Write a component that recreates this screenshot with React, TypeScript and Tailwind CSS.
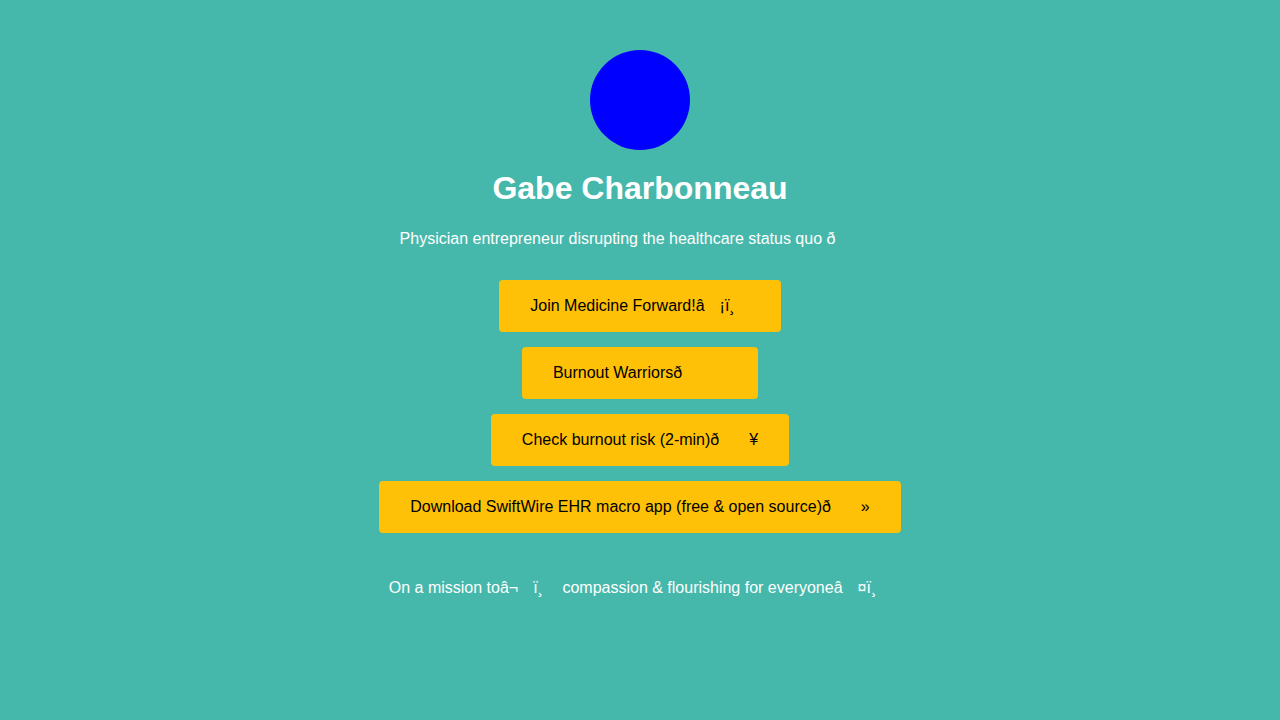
import React from "react";

// gap left by the unrenderable bytes in the broken emoji
const Gap: React.FC<{ n?: number }> = ({ n = 1 }) => (
    <span className={n === 1 ? "inline-block w-[15px]" : n === 2 ? "inline-block w-[30px]" : "inline-block w-[45px]"} />
);

const links: { id: number; label: React.ReactNode }[] = [
    { id: 1, label: <>Join Medicine Forward!â<Gap />¡ï¸<Gap /></> },
    { id: 2, label: <>Burnout Warriorsð<Gap n={3} /></> },
    { id: 3, label: <>Check burnout risk (2-min)ð<Gap n={2} />¥</> },
    { id: 4, label: <>Download SwiftWire EHR macro app (free &amp; open source)ð<Gap n={2} />»</> },
];

const App: React.FC = () => {
    return (
        <div className="min-h-screen w-full bg-[#46b8ab] text-white font-['Liberation_Sans',Arial,sans-serif]">
            <div className="flex flex-col items-center pt-[50px]">
                {/* Avatar */}
                <div className="w-[100px] h-[100px] rounded-full bg-[#0000ff]" />

                <h1 className="mt-[20px] text-[32px] leading-[37px] font-bold">Gabe Charbonneau</h1>
                <p className="mt-[23px] text-[16px] leading-[18px] whitespace-nowrap">
                    Physician entrepreneur disrupting the healthcare status quo ð<Gap n={3} />
                </p>

                {/* Links */}
                <div className="mt-[32px] flex flex-col items-center gap-[15px]">
                    {links.map((l) => (
                        <a
                            key={l.id}
                            href="#"
                            className="block px-[31px] py-[16px] bg-[#ffc107] text-black text-[16px] leading-[20px] rounded-[4px] whitespace-nowrap"
                        >
                            {l.label}
                        </a>
                    ))}
                </div>

                <p className="mt-[46px] text-[16px] leading-[18px] whitespace-nowrap">
                    On a mission toâ¬<Gap />ï¸<Gap /> compassion &amp; flourishing for everyoneâ<Gap />¤ï¸<Gap />
                </p>
            </div>
        </div>
    );
};

export default App;
